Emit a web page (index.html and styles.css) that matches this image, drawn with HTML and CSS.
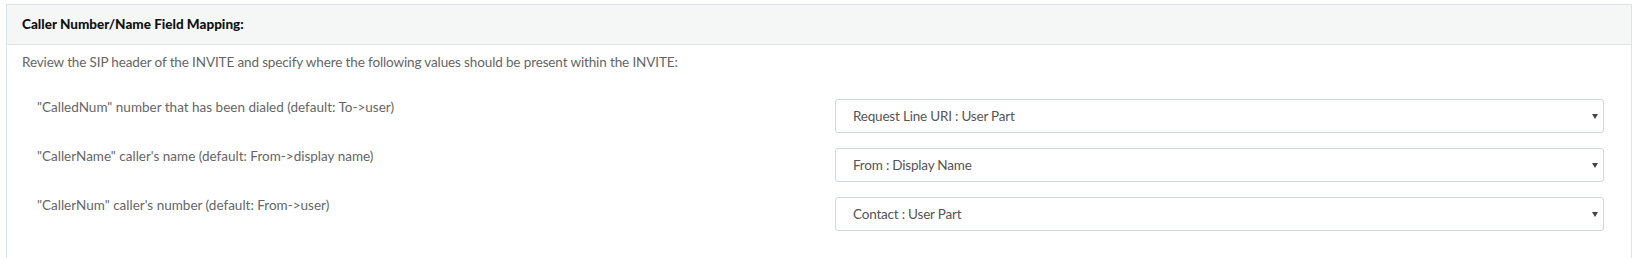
FILE: index.html
```html
<!DOCTYPE html>
<html lang="en">
<head>
    <meta charset="UTF-8">
    <meta name="viewport" content="width=device-width, initial-scale=1.0">
    <title>Caller Number/Name Field Mapping</title>
    <link rel="stylesheet" href="styles.css">
</head>
<body>
    <div class="panel">
        <div class="panel-heading">
            <h3 class="panel-title">Caller Number/Name Field Mapping:</h3>
        </div>

        <div class="panel-body">
            <p class="intro">Review the SIP header of the INVITE and specify where the following values should be present within the INVITE:</p>

            <div class="form-row">
                <label class="field-label" for="calledNum">"CalledNum" number that has been dialed (default: To-&gt;user)</label>
                <div class="select-wrap">
                    <select id="calledNum" class="field-select">
                        <option selected>Request Line URI : User Part</option>
                        <option>To : User Part</option>
                        <option>From : User Part</option>
                    </select>
                </div>
            </div>

            <div class="form-row">
                <label class="field-label" for="callerName">"CallerName" caller's name (default: From-&gt;display name)</label>
                <div class="select-wrap">
                    <select id="callerName" class="field-select">
                        <option selected>From : Display Name</option>
                        <option>Contact : Display Name</option>
                    </select>
                </div>
            </div>

            <div class="form-row">
                <label class="field-label" for="callerNum">"CallerNum" caller's number (default: From-&gt;user)</label>
                <div class="select-wrap">
                    <select id="callerNum" class="field-select">
                        <option selected>Contact : User Part</option>
                        <option>From : User Part</option>
                    </select>
                </div>
            </div>
        </div>
    </div>
</body>
</html>
```

FILE: styles.css
```css
:root {
    --border-color: #dde3e6;
    --input-border: #cfd8dc;
    --heading-bg: #f5f7f7;
    --text-color: #666;
}

body {
    font-family: Lato, "Open Sans", sans-serif;
    font-size: 13.5px;
    color: var(--text-color);
    margin: 0;
    padding: 4px 2px 0 6px;
    background: #fff;
}

.panel {
    border: 1px solid var(--border-color);
    background: #fff;
}

.panel-heading {
    background: var(--heading-bg);
    border-bottom: 1px solid var(--border-color);
    padding: 10px 15px;
}

.panel-title {
    margin: 0;
    font-size: 13.5px;
    font-weight: 900;
    line-height: 19px;
    color: #111;
}

.panel-body {
    padding: 7px 15px 15px;
}

.intro {
    margin: 0 0 27px;
    line-height: 20px;
    letter-spacing: -0.13px;
}

.form-row {
    display: grid;
    grid-template-columns: 1fr 769px;
    align-items: start;
    padding: 0 12px 0 15px;
    margin-bottom: 15px;
}

.field-label {
    line-height: 14px;
    padding-top: 1px;
}

.select-wrap {
    position: relative;
}

/* dropdown caret */
.select-wrap::after {
    content: "";
    position: absolute;
    right: 6px;
    top: 15px;
    border-left: 3px solid transparent;
    border-right: 3px solid transparent;
    border-top: 5px solid #444;
    pointer-events: none;
}

.field-select {
    -webkit-appearance: none;
    appearance: none;
    display: block;
    width: 100%;
    height: 34px;
    box-sizing: border-box;
    padding: 0 24px 0 17px;
    border: 1px solid var(--input-border);
    border-radius: 3px;
    background: #fff;
    font-family: inherit;
    font-size: 13.5px;
    letter-spacing: -0.2px;
    color: #555;
    outline: none;
}
```
